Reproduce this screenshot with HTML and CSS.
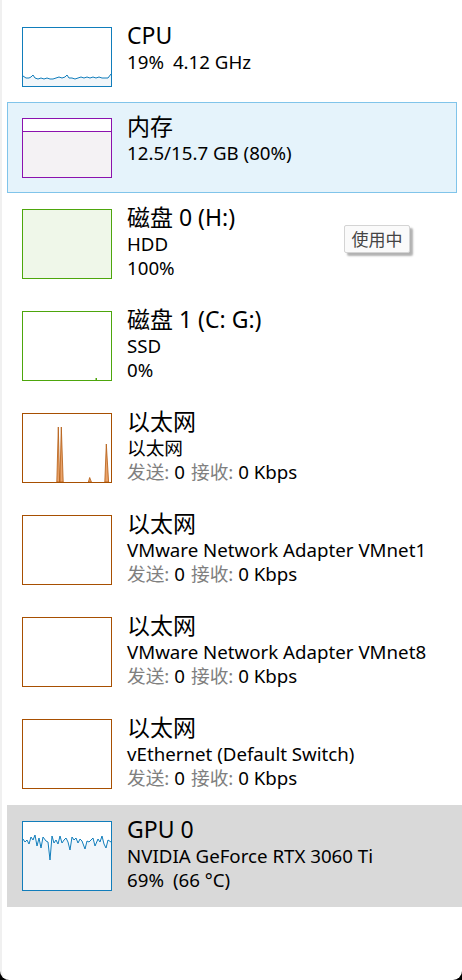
FILE: index.html
```html
<!DOCTYPE html>
<html lang="zh-CN">
<head>
<meta charset="utf-8">
<title>性能</title>
<link rel="stylesheet" href="styles.css">
</head>
<body>
<div class="window">
  <div class="list">
    <div class="item">
      <div class="thumb cpu">
        <svg width="88" height="58" viewBox="0 0 88 58">
          <polygon class="fill" points="0,48 3,50 6,50 8,49 10,47 12,50 15,51 18,50 21,51 24,50 27,51 30,51 33,50 36,49 39,50 42,49 44,47 46,50 49,50 52,51 55,50 58,49 61,50 64,49 67,50 70,49 73,50 76,49 79,50 82,50 85,50 88,46 88,58 0,58"/>
          <polyline class="line" points="0,48 3,50 6,50 8,49 10,47 12,50 15,51 18,50 21,51 24,50 27,51 30,51 33,50 36,49 39,50 42,49 44,47 46,50 49,50 52,51 55,50 58,49 61,50 64,49 67,50 70,49 73,50 76,49 79,50 82,50 85,50 88,46"/>
        </svg>
      </div>
      <div class="info">
        <div class="title">CPU</div>
        <div class="sub"><span class="gap">19%</span>4.12 GHz</div>
      </div>
    </div>

    <div class="item selected">
      <div class="thumb mem">
        <svg width="88" height="58" viewBox="0 0 88 58">
          <rect class="fill" x="0" y="12" width="88" height="46"/>
          <line class="line" x1="0" y1="12.5" x2="88" y2="12.5"/>
        </svg>
      </div>
      <div class="info">
        <div class="title">内存</div>
        <div class="sub">12.5/15.7 GB (80%)</div>
      </div>
    </div>

    <div class="item">
      <div class="thumb tall disk full"></div>
      <div class="info">
        <div class="title">磁盘 0 (H:)</div>
        <div class="sub">HDD</div>
        <div class="sub">100%</div>
      </div>
    </div>

    <div class="item">
      <div class="thumb tall disk">
        <svg width="88" height="68" viewBox="0 0 88 68">
          <rect x="72.5" y="66" width="1.5" height="2" fill="#4da60c"/>
        </svg>
      </div>
      <div class="info">
        <div class="title">磁盘 1 (C: G:)</div>
        <div class="sub">SSD</div>
        <div class="sub">0%</div>
      </div>
    </div>

    <div class="item">
      <div class="thumb tall eth">
        <svg width="88" height="68" viewBox="0 0 88 68">
          <path class="spike" d="M33.8,68 L35.3,13 L36.6,68 Z M36.9,68 L38.3,13 L40.2,68 Z M65.4,68 L66.7,63.5 L68.4,68 Z M81.8,68 L83.3,30 L85.6,68 Z"/>
        </svg>
      </div>
      <div class="info">
        <div class="title">以太网</div>
        <div class="sub">以太网</div>
        <div class="sub"><span class="muted">发送:</span> <span class="gap-s">0</span><span class="muted">接收:</span> 0 Kbps</div>
      </div>
    </div>

    <div class="item">
      <div class="thumb tall eth"></div>
      <div class="info">
        <div class="title">以太网</div>
        <div class="sub">VMware Network Adapter VMnet1</div>
        <div class="sub"><span class="muted">发送:</span> <span class="gap-s">0</span><span class="muted">接收:</span> 0 Kbps</div>
      </div>
    </div>

    <div class="item">
      <div class="thumb tall eth"></div>
      <div class="info">
        <div class="title">以太网</div>
        <div class="sub">VMware Network Adapter VMnet8</div>
        <div class="sub"><span class="muted">发送:</span> <span class="gap-s">0</span><span class="muted">接收:</span> 0 Kbps</div>
      </div>
    </div>

    <div class="item">
      <div class="thumb tall eth"></div>
      <div class="info">
        <div class="title">以太网</div>
        <div class="sub">vEthernet (Default Switch)</div>
        <div class="sub"><span class="muted">发送:</span> <span class="gap-s">0</span><span class="muted">接收:</span> 0 Kbps</div>
      </div>
    </div>

    <div class="item hovered">
      <div class="thumb tall cpu">
        <svg width="88" height="68" viewBox="0 0 88 68">
          <polygon class="fill" points="0,17 2,20 4,18 6,22 8,15 10,18 12,13 14,24 16,16 18,26 20,15 23,19 25,20 27,38 29,14 31,21 33,18 35,22 37,14 39,21 41,18 43,16 45,20 47,28 49,15 51,18 53,16 55,21 57,17 59,19 62,27 64,19 66,20 68,18 70,16 72,24 75,17 77,20 79,14 81,22 83,26 85,18 88,20 88,68 0,68"/>
          <polyline class="line" points="0,17 2,20 4,18 6,22 8,15 10,18 12,13 14,24 16,16 18,26 20,15 23,19 25,20 27,38 29,14 31,21 33,18 35,22 37,14 39,21 41,18 43,16 45,20 47,28 49,15 51,18 53,16 55,21 57,17 59,19 62,27 64,19 66,20 68,18 70,16 72,24 75,17 77,20 79,14 81,22 83,26 85,18 88,20"/>
        </svg>
      </div>
      <div class="info">
        <div class="title">GPU 0</div>
        <div class="sub">NVIDIA GeForce RTX 3060 Ti</div>
        <div class="sub"><span class="gap">69%</span>(66 °C)</div>
      </div>
    </div>
  </div>

  <div class="tooltip">使用中</div>
</div>
</body>
</html>
```

FILE: styles.css
```css
html, body {
  margin: 0;
  padding: 0;
  background: #000;
}

.window {
  position: relative;
  width: 460px;
  height: 980px;
  background: #fff;
  border-left: 2px solid #f0f0f0;
  border-radius: 0 0 9px 9px;
  overflow: hidden;
  font-family: "Noto Sans", "Noto Sans CJK SC", sans-serif;
  color: #000;
}

.list {
  display: flex;
  flex-direction: column;
  padding: 11px 5px 0 5px;
}

.item {
  display: flex;
  align-items: flex-start;
  gap: 15px;
  padding: 15px 14px 14px 14px;
  border: 1px solid transparent;
}

.item.selected {
  background: #e5f3fb;
  border-color: #80c4ea;
}

.item.hovered {
  background: #d9d9d9;
  border-color: #d9d9d9;
  margin-right: -5px;
}

.thumb {
  flex: none;
  width: 88px;
  height: 58px;
  border: 1px solid #117dbb;
  background: #fff;
}

.thumb.tall {
  height: 68px;
  margin-bottom: 1px;
}

.thumb svg {
  display: block;
}

.thumb.cpu { border-color: #117dbb; }
.thumb.cpu .fill { fill: #f1f6fa; }
.thumb.cpu .line { fill: none; stroke: #117dbb; stroke-width: 1; }

.thumb.mem { border-color: #8b12ae; }
.thumb.mem .fill { fill: #f4f2f4; }
.thumb.mem .line { stroke: #8b12ae; stroke-width: 1; }

.thumb.disk { border-color: #4da60c; }
.thumb.disk.full { background: #eff7e9; }

.thumb.eth { border-color: #a74f01; }
.thumb.eth .spike {
  fill: #eaa36a;
  stroke: #b35a10;
  stroke-width: 0.8;
  stroke-linejoin: round;
}

.info {
  display: flex;
  flex-direction: column;
  min-width: 0;
}

.title {
  font-size: 23px;
  line-height: 23px;
  margin-top: -3px;
  margin-bottom: 3px;
  white-space: nowrap;
}

.sub {
  font-size: 18.7px;
  line-height: 24px;
  white-space: nowrap;
}

.gap {
  margin-right: 9px;
}

.gap-s {
  margin-right: 6px;
}

.muted {
  color: #808080;
}

.tooltip {
  position: absolute;
  left: 342px;
  top: 225px;
  width: 64px;
  height: 26px;
  border: 1px solid #d4d4d4;
  border-radius: 2px;
  background: #fafafa;
  box-shadow: 3px 3px 2px rgba(0, 0, 0, 0.3);
  color: #444;
  font-family: "Noto Sans CJK SC", sans-serif;
  font-size: 17px;
  line-height: 26px;
  text-align: center;
}
```
